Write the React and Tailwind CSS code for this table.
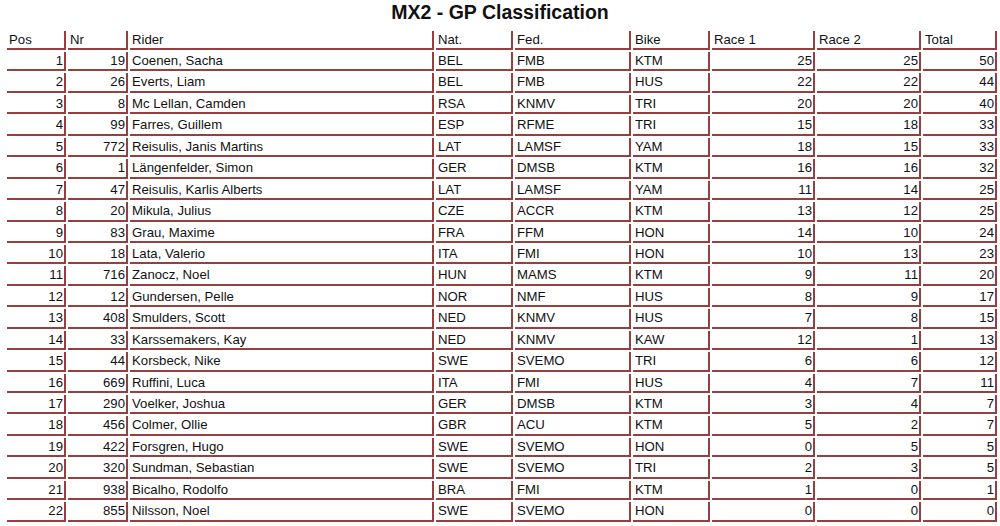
import React from 'react';

const rows = [
  [1, 19, 'Coenen, Sacha', 'BEL', 'FMB', 'KTM', 25, 25, 50],
  [2, 26, 'Everts, Liam', 'BEL', 'FMB', 'HUS', 22, 22, 44],
  [3, 8, 'Mc Lellan, Camden', 'RSA', 'KNMV', 'TRI', 20, 20, 40],
  [4, 99, 'Farres, Guillem', 'ESP', 'RFME', 'TRI', 15, 18, 33],
  [5, 772, 'Reisulis, Janis Martins', 'LAT', 'LAMSF', 'YAM', 18, 15, 33],
  [6, 1, 'Längenfelder, Simon', 'GER', 'DMSB', 'KTM', 16, 16, 32],
  [7, 47, 'Reisulis, Karlis Alberts', 'LAT', 'LAMSF', 'YAM', 11, 14, 25],
  [8, 20, 'Mikula, Julius', 'CZE', 'ACCR', 'KTM', 13, 12, 25],
  [9, 83, 'Grau, Maxime', 'FRA', 'FFM', 'HON', 14, 10, 24],
  [10, 18, 'Lata, Valerio', 'ITA', 'FMI', 'HON', 10, 13, 23],
  [11, 716, 'Zanocz, Noel', 'HUN', 'MAMS', 'KTM', 9, 11, 20],
  [12, 12, 'Gundersen, Pelle', 'NOR', 'NMF', 'HUS', 8, 9, 17],
  [13, 408, 'Smulders, Scott', 'NED', 'KNMV', 'HUS', 7, 8, 15],
  [14, 33, 'Karssemakers, Kay', 'NED', 'KNMV', 'KAW', 12, 1, 13],
  [15, 44, 'Korsbeck, Nike', 'SWE', 'SVEMO', 'TRI', 6, 6, 12],
  [16, 669, 'Ruffini, Luca', 'ITA', 'FMI', 'HUS', 4, 7, 11],
  [17, 290, 'Voelker, Joshua', 'GER', 'DMSB', 'KTM', 3, 4, 7],
  [18, 456, 'Colmer, Ollie', 'GBR', 'ACU', 'KTM', 5, 2, 7],
  [19, 422, 'Forsgren, Hugo', 'SWE', 'SVEMO', 'HON', 0, 5, 5],
  [20, 320, 'Sundman, Sebastian', 'SWE', 'SVEMO', 'TRI', 2, 3, 5],
  [21, 938, 'Bicalho, Rodolfo', 'BRA', 'FMI', 'KTM', 1, 0, 1],
  [22, 855, 'Nilsson, Noel', 'SWE', 'SVEMO', 'HON', 0, 0, 0],
];

const headers = ['Pos', 'Nr', 'Rider', 'Nat.', 'Fed.', 'Bike', 'Race 1', 'Race 2', 'Total'];
// numeric columns are right aligned
const rightCols = [0, 1, 6, 7, 8];

const cell = 'border-r-2 border-b-2 border-[#953f3f] pl-[2px] pr-[1px] py-0 leading-[17.43px] whitespace-nowrap';

const App = () => {
  return (
    <div className="w-[1000px] h-[526px] bg-white text-[#111] overflow-hidden px-[5px]" style={{ fontFamily: '"Liberation Sans", Arial, sans-serif' }}>
      <h1 className="text-center text-[19.5px] font-bold leading-[24px] mb-[4.6px]">MX2 - GP Classification</h1>

      <table className="table-fixed border-separate border-spacing-[2px] w-[994px] text-[13.2px]">
        <colgroup>
          <col className="w-[59px]" />
          <col className="w-[60px]" />
          <col className="w-[304px]" />
          <col className="w-[77px]" />
          <col className="w-[116px]" />
          <col className="w-[77px]" />
          <col className="w-[103px]" />
          <col className="w-[104px]" />
          <col className="w-[74px]" />
        </colgroup>
        <thead>
          <tr>
            {headers.map((h) => (
              <th key={h} className={`${cell} text-left font-normal`}>{h}</th>
            ))}
          </tr>
        </thead>
        <tbody>
          {rows.map((r) => (
            <tr key={r[0]}>
              {r.map((v, i) => (
                <td key={i} className={`${cell} ${rightCols.includes(i) ? 'text-right' : 'text-left'}`}>{v}</td>
              ))}
            </tr>
          ))}
        </tbody>
      </table>
    </div>
  );
};

export default App;
